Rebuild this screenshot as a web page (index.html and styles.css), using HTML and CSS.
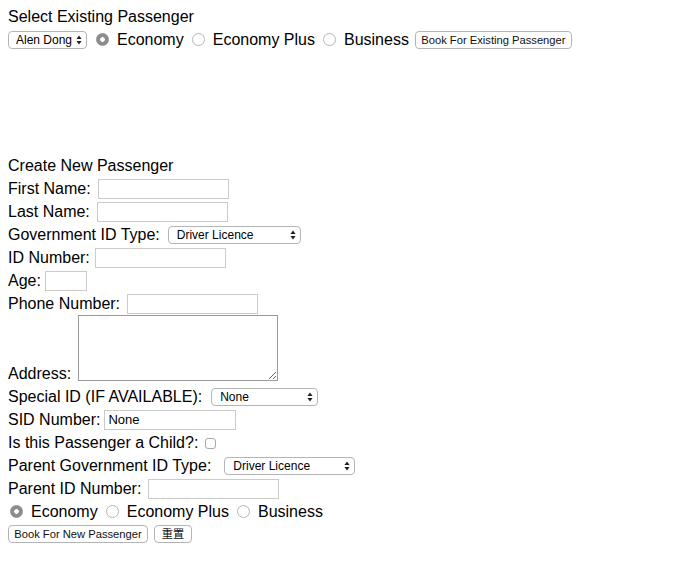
FILE: index.html
```html
<!DOCTYPE html>
<html>
<head>
<meta charset="utf-8">
<title>Booking</title>
<link rel="stylesheet" href="styles.css">
</head>
<body>
<div class="row r0">Select Existing Passenger</div>
<div class="row r1">
  <span class="sel w-alen"><select class="select"><option>Alen Dong</option></select><svg class="arrow" width="6" height="10" viewBox="0 0 6 10"><path d="M3 0.5 L5.6 4 H0.4 Z M3 9.5 L5.6 6 H0.4 Z" fill="#222"/></svg></span>
  <input type="radio" name="c1" class="radio first-in-row" checked><span class="opt">Economy</span>
  <input type="radio" name="c1" class="radio"><span class="opt">Economy Plus</span>
  <input type="radio" name="c1" class="radio"><span class="opt">Business</span>
  <button class="btn w-exist">Book For Existing Passenger</button>
</div>
<div class="spacer"></div>
<form class="create">
  <div class="row">Create New Passenger</div>
  <div class="row"><span>First Name:</span><input type="text" class="txt ctl"></div>
  <div class="row"><span>Last Name:</span><input type="text" class="txt ctl"></div>
  <div class="row"><span>Government ID Type:</span><span class="sel ctl w-gov"><select class="select"><option>Driver Licence</option></select><svg class="arrow" width="6" height="10" viewBox="0 0 6 10"><path d="M3 0.5 L5.6 4 H0.4 Z M3 9.5 L5.6 6 H0.4 Z" fill="#222"/></svg></span></div>
  <div class="row"><span>ID Number:</span><input type="text" class="txt ctl idn"></div>
  <div class="row"><span>Age:</span><input type="text" class="txt ctl age"></div>
  <div class="row"><span>Phone Number:</span><input type="text" class="txt ctl"></div>
  <div class="row addr"><span>Address:</span><textarea class="area ctl"></textarea></div>
  <div class="row"><span>Special ID (IF AVAILABLE):</span><span class="sel ctl w-spec"><select class="select"><option>None</option></select><svg class="arrow" width="6" height="10" viewBox="0 0 6 10"><path d="M3 0.5 L5.6 4 H0.4 Z M3 9.5 L5.6 6 H0.4 Z" fill="#222"/></svg></span></div>
  <div class="row"><span>SID Number:</span><input type="text" class="txt ctl sid" value="None"></div>
  <div class="row"><span>Is this Passenger a Child?:</span><input type="checkbox" class="check"></div>
  <div class="row"><span>Parent Government ID Type:</span><span class="sel ctl w-par"><select class="select"><option>Driver Licence</option></select><svg class="arrow" width="6" height="10" viewBox="0 0 6 10"><path d="M3 0.5 L5.6 4 H0.4 Z M3 9.5 L5.6 6 H0.4 Z" fill="#222"/></svg></span></div>
  <div class="row"><span>Parent ID Number:</span><input type="text" class="txt ctl"></div>
  <div class="row radios">
    <input type="radio" name="c2" class="radio first" checked><span class="opt">Economy</span>
    <input type="radio" name="c2" class="radio"><span class="opt">Economy Plus</span>
    <input type="radio" name="c2" class="radio"><span class="opt">Business</span>
  </div>
  <div class="row">
    <button type="button" class="btn w-new">Book For New Passenger</button>
    <button type="reset" class="btn w-reset">重置</button>
  </div>
</form>
</body>
</html>
```
FILE: styles.css
```css
body {
  margin: 0 8px;
  font-family: "Liberation Sans", Arial, sans-serif;
  font-size: 16px;
  line-height: 23px;
  color: #000;
  background: #fff;
}

.row {
  display: flex;
  align-items: center;
  height: 23px;
  white-space: nowrap;
}

.r0 {
  margin-top: 5px;
}

.spacer {
  height: 103px;
}

.create {
  margin: 0;
}

.ctl {
  margin-left: 7px;
}

.txt {
  box-sizing: border-box;
  width: 131px;
  height: 20px;
  margin-top: 0;
  margin-bottom: 0;
  padding: 0 3px;
  border: 1px solid #cbcbcb;
  border-radius: 0;
  font-family: "Liberation Sans", Arial, sans-serif;
  font-size: 13px;
  color: #000;
  background: #fff;
  outline: none;
}

.idn {
  margin-left: 5px;
}

.age {
  width: 42px;
  margin-left: 4px;
}

.sid {
  width: 132px;
  margin-left: 4px;
}

.addr {
  height: 70px;
  align-items: flex-end;
}

.area {
  box-sizing: border-box;
  width: 200px;
  height: 66px;
  margin-bottom: 4px;
  margin-top: 0;
  padding: 2px;
  border: 1px solid #9a9a9a;
  border-radius: 0;
  font-family: "Liberation Mono", monospace;
  font-size: 13px;
  background: #fff;
}

.radios {
  height: 22px;
}

.sel {
  position: relative;
  display: inline-block;
  height: 18px;
}

.select {
  -webkit-appearance: none;
  appearance: none;
  box-sizing: border-box;
  display: block;
  width: 100%;
  height: 18px;
  margin: 0;
  padding: 0 14px 0 8px;
  border: 1px solid #b4b4b4;
  border-radius: 4px;
  background: #fff;
  font-family: "Liberation Sans", Arial, sans-serif;
  font-size: 12px;
  line-height: 16px;
  color: #000;
  outline: none;
}

.arrow {
  position: absolute;
  right: 5px;
  top: 4px;
}

.w-alen { width: 79px; }
.w-alen .select { padding-left: 7px; }
.w-gov { width: 133px; margin-left: 8px; }
.w-spec { width: 107px; margin-left: 9px; }
.w-par { width: 131px; margin-left: 13px; }

.radio {
  -webkit-appearance: none;
  appearance: none;
  box-sizing: border-box;
  width: 13px;
  height: 13px;
  margin: 0 0 0 8px;
  border: 1px solid #b6b6b6;
  border-radius: 50%;
  background: #fff;
  flex: none;
}

.radio:checked {
  border-color: #8d8d8d;
  background: radial-gradient(circle, #fff 0 2px, #8d8d8d 2.6px);
}

.first-in-row {
  margin-left: 9px;
}

.first {
  margin-left: 2px;
}

.opt {
  margin-left: 8px;
}

.check {
  -webkit-appearance: none;
  appearance: none;
  box-sizing: border-box;
  width: 11px;
  height: 11px;
  margin: 1px 0 0 7px;
  border: 1px solid #a8a8a8;
  border-radius: 3px;
  background: #fff;
}

.btn {
  box-sizing: border-box;
  height: 18px;
  margin: 0;
  padding: 0 2px;
  border: 1px solid #b4b4b4;
  border-radius: 4px;
  background: #fff;
  font-family: "Liberation Sans", "Noto Sans CJK TC", Arial, sans-serif;
  font-size: 11.2px;
  line-height: 16px;
  color: #111;
  white-space: nowrap;
}

.w-exist {
  width: 157px;
  margin-left: 6px;
}

.w-new {
  width: 140px;
}

.w-reset {
  width: 38px;
  margin-left: 6px;
}
```
